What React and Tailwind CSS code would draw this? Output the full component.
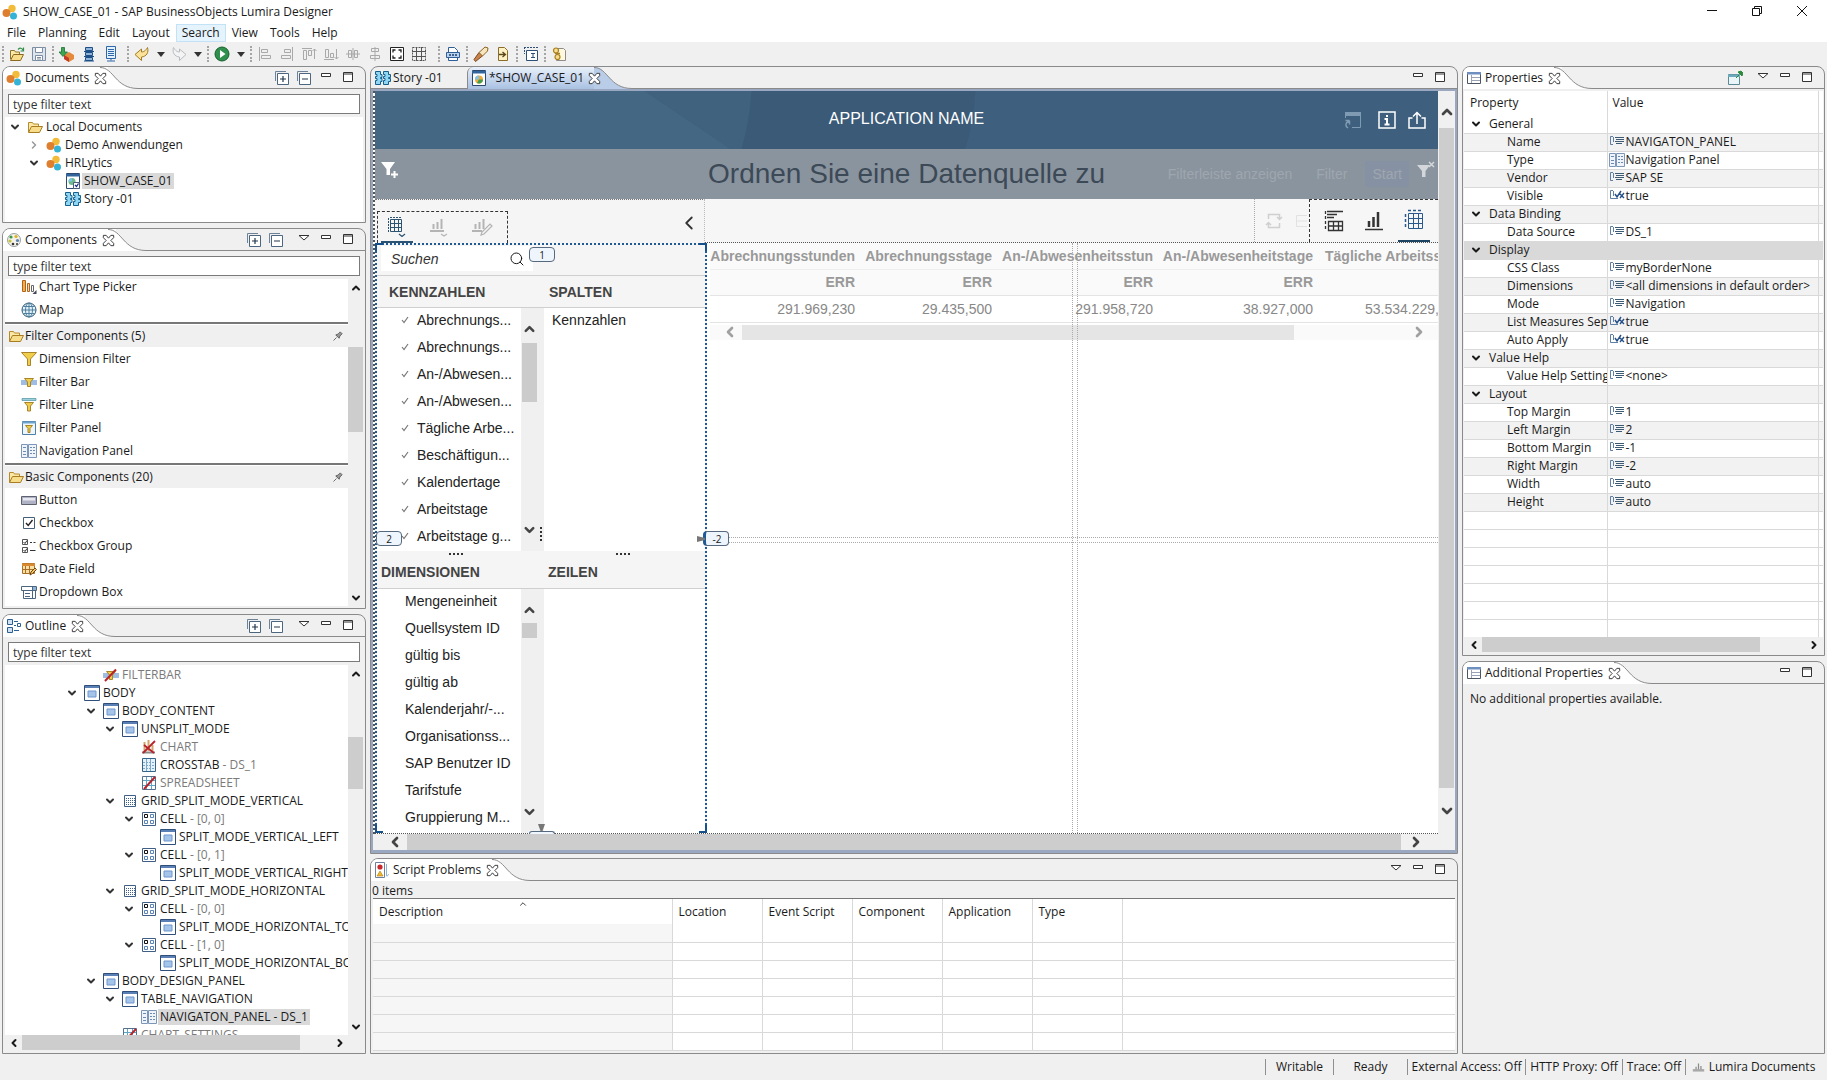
import { ChevronDown, ChevronLeft, ChevronRight, ChevronUp, Search } from "lucide-react";

const UI_FONT = "font-['Open_Sans','Noto_Sans',sans-serif]";
const APP_FONT = "font-['Liberation_Sans',Arial,sans-serif]";

function Icon({ size = 16, className = "", children }) {
  return (
    <svg
      width={size}
      height={size}
      viewBox="0 0 16 16"
      fill="none"
      aria-hidden="true"
      className={`shrink-0 ${className}`}
    >
      {children}
    </svg>
  );
}

const icons = {
  lumira: (
    <>
      <circle cx="10" cy="4.500" r="3.700" fill="#f2bc3a" />
      <circle cx="4.500" cy="9" r="4" fill="#dd7f2e" />
      <circle cx="11.500" cy="12" r="3.500" fill="#35b3d6" />
    </>
  ),
  folder: (
    <>
      <path d="M1.500 13V3.500h4l1 1.500h5v2.500" fill="#fbe7a6" stroke="#b58a2c" />
      <path d="M1.500 13.500 4.500 7.500h11l-3 6z" fill="#f7dc8a" stroke="#a87c20" />
    </>
  ),
  openFolder: (
    <>
      <path d="M1.500 13V4.500h4l1 1.500h4v2" fill="#fbe7a6" stroke="#8a7430" />
      <path d="M1.500 14.500 4.500 8.500h10l-3 6z" fill="#f7dc8a" stroke="#8a6a20" />
      <path d="M9 3.500c2-2 4-1.500 5 .5M14.500 1.500V5h-3" stroke="#2f8f4a" strokeWidth="1.200" />
    </>
  ),
  save: (
    <>
      <path d="M1.500 1.500h13v13h-13z" fill="#dfe5ec" stroke="#7d8ea3" />
      <path d="M4.500 1.500h7v5h-7zM4.500 9.500h7v5h-7zM6 11.500h4M6 13h4" fill="#fff" stroke="#7d8ea3" />
    </>
  ),
  deploy: (
    <>
      <path d="m5 9 5-3 5 3v4l-5 3-5-3z" fill="#e58a3a" />
      <path d="m5 9 5 3v4l-5-3z" fill="#c23a2a" />
      <path d="M2.500 1.500h3V6h3L4 10.500 0 6h2.500z" fill="#3aa653" stroke="#1d7034" strokeWidth=".8" />
    </>
  ),
  stackBlue: (
    <>
      <path d="M4.500 1.500h7v3h-7zM4.500 6.500h7v3h-7zM4.500 11.500h7v3h-7z" fill="#8fb4dc" stroke="#1f4f86" />
      <path d="M3 5.500h10M3 10.500h10M3 15h10" stroke="#1f4f86" />
    </>
  ),
  serverBlue: (
    <>
      <path d="M3.500.5h9v12h-9z" fill="#e4f0fb" stroke="#2f67a8" />
      <path d="M5 3.500h6M5 5.500h6M5 7.500h6M5 9.500h6M8 12.500v2M4 15h8" stroke="#2f67a8" />
    </>
  ),
  undo: <path d="M1 8.500 7.500 3v3c2 0 4-1 6-4.500 1.500 5-1 9-6 9.500v3.500z" fill="#fbe29a" stroke="#a37a22" />,
  redo: <path d="M15 8.500 8.500 3v3c-2 0-4-1-6-4.500C1 6.500 3.500 10.500 8.500 11v3.500z" fill="#f4f4f4" stroke="#b8bcc0" />,
  run: (
    <>
      <circle cx="8" cy="8" r="7" fill="#2f8f4c" stroke="#17602d" />
      <path d="M6 4v8l5.500-4z" fill="#fff" />
    </>
  ),
  alignLeft: <path d="M2.500 1v14M4.500 3.500h6v3h-6zM4.500 9.500h9v3h-9z" stroke="#a9a9a9" />,
  alignRight: <path d="M13.500 1v14M5.500 3.500h6v3h-6zM2.500 9.500h9v3h-9z" stroke="#a9a9a9" />,
  alignTop: <path d="M1 2.500h10M2.500 4.500h3v9h-3zM7.500 4.500h3v5h-3zM13.500 13V3M11.500 5l2-2 2 2" stroke="#a9a9a9" />,
  alignBottom: <path d="M1 13.500h10M2.500 3.500h3v8h-3zM7.500 7.500h3v4h-3zM13.500 3v10M11.500 11l2 2 2-2" stroke="#a9a9a9" />,
  centerH: <path d="M1 8h14M3.500 4.500h3v7h-3zM9.500 4.500h3v7h-3zM8 2v12" stroke="#a9a9a9" />,
  centerV: <path d="M8 1v14M4.500 2.500h7v3h-7zM3.500 9.500h9v3h-9z" stroke="#a9a9a9" />,
  maximizeBox: (
    <>
      <path d="M1.500 1.500h13v13h-13z" fill="#fff" stroke="#222" />
      <path d="M4 6.500V4h2.500M9.500 4H12v2.500M12 9.500V12H9.500M6.500 12H4V9.500" stroke="#222" strokeWidth="1.300" />
    </>
  ),
  gridDark: (
    <>
      <path d="M1.500 1.500h13v13h-13z" stroke="#555" strokeDasharray="2 1" />
      <path d="M5.500 1v14M10.500 1v14M1 5.500h14M1 10.500h14" stroke="#555" />
    </>
  ),
  cssFile: (
    <>
      <path d="M3.500 7V1.500h6l3 3V7M3.500 11v3.500h9V11" fill="#fff" stroke="#2f5f96" />
      <path d="M1.500 6.500h13v5h-13z" fill="#b9d3ee" stroke="#2f5f96" />
      <path d="M4 9h2M7 9h2M10 9h2" stroke="#1d3f6a" strokeWidth="1.500" />
    </>
  ),
  torch: (
    <>
      <path d="m2.500 15.500-1.500-2 5-7 4 3z" fill="#c9824a" stroke="#7a4a20" />
      <path d="M6 6.500 12 1l3 1-.5 3L9.500 10z" fill="#f6e5bd" stroke="#8a6426" />
    </>
  ),
  importFile: (
    <>
      <path d="M3.500 1.500h6l3 3v10h-9z" fill="#fdf1c6" stroke="#8a6d28" />
      <path d="M4 8.500h6M7.500 6l3 2.500-3 2.500" stroke="#5a4718" strokeWidth="1.300" />
    </>
  ),
  textBox: (
    <>
      <path d="M3.500 4.500h11v10h-11z" fill="#fff" stroke="#2d4f78" />
      <path d="M1 1.500h14M1.500 1v7" stroke="#2d4f78" strokeDasharray="2 1" />
      <path d="M8 7.500h4M10 7.500v4M8 11.500h4" stroke="#2d4f78" />
    </>
  ),
  script: (
    <>
      <path d="M5.500 2.500h7l2 2v10h-9z" fill="#fff8dc" stroke="#8c8c8c" />
      <circle cx="5" cy="4.500" r="2.500" fill="#f6dc8c" stroke="#a9801f" strokeWidth="1.200" />
      <circle cx="6.500" cy="11" r="2.500" fill="#f6dc8c" stroke="#a9801f" strokeWidth="1.200" />
      <path d="M4 7.500h5" stroke="#a9801f" strokeWidth="1.500" />
    </>
  ),
  story: (
    <>
      <path d="M.5 1.500h5v3H7v3H5.500v1H7v3H5.500v3h-5v-4H2v-2H.5v-2H2v-2H.5z" fill="#8fd6f5" stroke="#15608e" />
      <path d="M8.500 1.500h5v3h2v3h-2v1h2v3h-2v3h-5v-4H10v-2H8.500v-2H10v-2H8.500z" fill="#8fd6f5" stroke="#15608e" />
    </>
  ),
  appDoc: (
    <>
      <path d="M1.500.5h13v15h-13z" fill="#fff" stroke="#2c4a70" />
      <path d="M1 1h14v2.500H1z" fill="#33649c" />
      <circle cx="8" cy="9.500" r="4" fill="#f0a93a" />
      <path d="M8 9.500h4a4 4 0 0 1-6 3.400z" fill="#3f9d4c" />
      <path d="M8 9.500V5.500a4 4 0 0 0-4 4z" fill="#7fc4e8" />
    </>
  ),
  appDocChecked: (
    <>
      <path d="M1.500.5h13v15h-13z" fill="#fff" stroke="#2c4a70" />
      <path d="M1 1h14v2.500H1z" fill="#33649c" />
      <circle cx="7" cy="8.500" r="3.500" fill="#6fb98a" />
      <path d="M7 8.500V5a3.500 3.500 0 0 0-3.500 3.500z" fill="#7fc4e8" />
      <path d="M8.500 9.500h6v6h-6z" fill="#fff" stroke="#4c5f7a" />
      <path d="m10 12 1.500 1.500 2-3" stroke="#1d2f8a" strokeWidth="1.300" />
    </>
  ),
  palette: (
    <>
      <circle cx="8" cy="8" r="6.500" fill="#f4f2ea" stroke="#9aa0a0" />
      <circle cx="5" cy="5" r="1.600" fill="#3e9a4a" />
      <circle cx="10" cy="4.500" r="1.600" fill="#d8b322" />
      <circle cx="4" cy="9" r="1.600" fill="#c5c33a" />
      <circle cx="11.500" cy="8.500" r="1.600" fill="#5c84b0" />
      <circle cx="7" cy="12" r="1.300" fill="#333" />
      <circle cx="11" cy="12" r="1" fill="#333" />
    </>
  ),
  outline: (
    <>
      <path d="M1.500 1.500h5v5h-5zM1.500 9.500h5v5h-5z" fill="#cfe2f5" stroke="#2b5f92" />
      <path d="M8 3.500h4M8 12.500h5M8 7.500h2M11.500 5.500h3v3h-3z" stroke="#2b5f92" />
    </>
  ),
  table: (
    <>
      <path d="M1.500 2.500h13v11h-13z" fill="#fff" stroke="#4b5566" />
      <path d="M1 2h14v2.500H1z" fill="#6f8fc0" />
      <path d="M5.500 5v8M6 7.500h8M6 10.500h8" stroke="#9aa3b5" />
    </>
  ),
  problems: (
    <>
      <path d="M1.500.5h9v15h-9z" fill="#fff" stroke="#6f7fa0" />
      <circle cx="6" cy="5" r="2.600" fill="#c9282d" />
      <path d="m6 9 3 5H3z" fill="#efb82a" stroke="#a87b10" strokeWidth=".6" />
      <path d="M12.500 2v12c1.500 0 2-1 2-2" stroke="#8fb0cf" />
    </>
  ),
  chartPicker: (
    <>
      <path d="M1.500 1.500h3v11h-3z" fill="#f1b04e" stroke="#b0641c" />
      <path d="M6.500 4.500h2v8h-2z" fill="#f7d5a0" stroke="#b0641c" />
      <path d="M10.500 6.500h2v6h-2z" fill="#fff" stroke="#666" />
      <path d="M15.500 11v4h-4z" fill="#445" />
    </>
  ),
  globe: (
    <>
      <circle cx="8" cy="8" r="7" fill="#e6f3fb" stroke="#2c5570" />
      <path d="M8 1v14M1 8h14M2.500 4.500h11M2.500 11.500h11" stroke="#4d7f9e" />
      <ellipse cx="8" cy="8" rx="3.500" ry="7" stroke="#4d7f9e" />
    </>
  ),
  funnel: <path d="M.5 1.500h15L9.500 8v6.500h-3V8z" fill="#f0cd4a" stroke="#a8842a" />,
  filterBar: (
    <>
      <path d="M0 6h16v5H0z" fill="#9fbde3" />
      <path d="M3.500 4.500h9L9.500 8v4.500h-3V8z" fill="#f0cd4a" stroke="#a8842a" />
    </>
  ),
  filterLine: (
    <>
      <path d="M1 1.500h14v2H1z" fill="#9ed0dc" stroke="#4a90a2" strokeWidth=".7" />
      <path d="M3.500 5.500h9L9.500 9v5h-3V9z" fill="#f0cd4a" stroke="#a8842a" />
    </>
  ),
  filterPanel: (
    <>
      <path d="M1.500 1.500h13v13h-13z" fill="#eef6fb" stroke="#4f7fa5" />
      <path d="M1 1.500h14v2H1z" fill="#6ea3cc" />
      <path d="M4.500 5.500h7L9 8.500v4H7v-4z" fill="#f0cd4a" stroke="#a8842a" />
    </>
  ),
  navPanel: (
    <>
      <path d="M.5 1.500h6v13h-6zM7.500 1.500h8v13h-8z" fill="#eef4fa" stroke="#7d96b8" />
      <path d="M2 4.500h3M2 8.500h3M2 11.500h3M9 4.500h2M12 4.500h2M9 7.500h2M12 7.500h2M9 10.500h2M12 10.500h2" stroke="#6d8ab0" />
    </>
  ),
  button: (
    <>
      <path d="M.5 4.500h15v8H.5z" fill="#aeb2c4" stroke="#5e6270" />
      <path d="M2 6h12v2.500H2z" fill="#e8e9f0" />
    </>
  ),
  checkbox: (
    <>
      <path d="M2.500 2.500h11v11h-11z" fill="#fff" stroke="#45607a" />
      <path d="m5 8 2.200 2.500L11.500 5" stroke="#222" strokeWidth="1.400" />
    </>
  ),
  checkboxGroup: (
    <>
      <path d="M1.500 1.500h5v5h-5zM1.500 9.500h5v5h-5z" fill="#fff" stroke="#555" />
      <path d="m2.500 4 1.500 1.500L6 2.500M2.500 12 4 13.500 6 10.500M9 4.500h2M12.500 4.500h2M9 12.500h5.500" stroke="#333" />
    </>
  ),
  dateField: (
    <>
      <path d="M1.500 2.500h12v10h-12z" fill="#fbe0a3" stroke="#a8702a" />
      <path d="M1 2.500h13v2.500H1z" fill="#d98a30" />
      <path d="M4.500 5v7M8.500 5v7M2 8.500h11" stroke="#a8702a" />
      <path d="m9 14 1-3 4-4 1.500 1.500-4 4z" fill="#f7c65a" stroke="#6b4518" />
    </>
  ),
  dropdown: (
    <>
      <path d="M.5 2.500h15v4H.5zM2.500 6.500h12v8h-12z" fill="#fff" stroke="#4c6680" />
      <path d="M11.500 2.500v12M4 9.500h5M4 12.500h5" stroke="#4c6680" />
      <path d="M12 3h3v3h-3z" fill="#8fb3d9" />
    </>
  ),
  panel: (
    <>
      <path d="M.5.5h15v15H.5z" fill="#fff" stroke="#2f4f7a" />
      <path d="M1 1h14v2H1z" fill="#5a80b5" />
      <path d="M4 6h8v6H4z" fill="#a5c4ea" stroke="#6f97cc" />
    </>
  ),
  chartHidden: (
    <>
      <path d="M3.500 3v9M7.500 1v11M11.500 6v6" stroke="#d3a468" strokeWidth="2" />
      <path d="M1 13.500h13" stroke="#8a8a8a" strokeWidth="2" />
      <path d="M2 14 14 2M3 6l10 8" stroke="#b8232b" strokeWidth="1.800" />
    </>
  ),
  crosstab: (
    <>
      <path d="M1.500 1.500h13v13h-13z" fill="#e6f2fa" stroke="#33658a" />
      <path d="M5.500 2v12M9.500 2v12" stroke="#7fa9c7" />
      <path d="M2 5.500h12M2 8.500h12M2 11.500h12" stroke="#7fa9c7" strokeDasharray="2 1" />
    </>
  ),
  sheetHidden: (
    <>
      <path d="M1.500 1.500h13v13h-13z" fill="#fff" stroke="#54708c" />
      <path d="M5.500 2v12M10.500 2v12M2 5.500h12M2 10.500h12" stroke="#5fa5c4" />
      <path d="M3 14 14 2" stroke="#b8232b" strokeWidth="2" />
    </>
  ),
  filterBarHidden: (
    <>
      <path d="M0 6h16v5H0z" fill="#9fbde3" />
      <path d="M3.500 4.500h9L9.500 8v4.500h-3V8z" fill="#f0cd4a" stroke="#a8842a" />
      <path d="M2 14 13 2.500" stroke="#b8232b" strokeWidth="2" />
    </>
  ),
  gridDots: (
    <>
      <path d="M2.500 2.500h11v11h-11z" fill="#fff" stroke="#3f5f86" />
      <path d="M4 5.500h9M4 7.500h9M4 9.500h9M4 11.500h9" stroke="#3f5f86" strokeDasharray="1 1" />
    </>
  ),
  cell: (
    <>
      <path d="M1.500 1.500h13v13h-13z" fill="#fff" stroke="#3f5f86" />
      <path d="M3.500 3.500h3v3h-3z" stroke="#111" />
      <path d="M9.500 3.500h3v3h-3zM3.500 9.500h3v3h-3zM9.500 9.500h3v3h-3z" stroke="#5c84b5" />
    </>
  ),
  propText: (
    <>
      <path d="M4 2.500H1.500v8H4M4.500 3v5" stroke="#5f7fa5" />
      <path d="M6 3.500h9M7 5.500h8M6 7.500h9M7 9.500h6" stroke="#3d5a73" />
    </>
  ),
  propBool: (
    <>
      <path d="M4 2.500H1.500v8H9M4.500 3v5" stroke="#5f7fa5" />
      <path d="m6 6 2 3 4-6M10 5l5 5M15 5l-4 5" stroke="#24508a" strokeWidth="1.400" />
    </>
  ),
  expandAll: (
    <>
      <path d="M1.500 11V1.500H12" stroke="#6d8296" />
      <path d="M3.500 3.500h11v11h-11z" fill="#fff" stroke="#4c6680" />
      <path d="M6 9h6M9 6v6" stroke="#20364d" strokeWidth="1.200" />
    </>
  ),
  collapseAll: (
    <>
      <path d="M1.500 11V1.500H12" stroke="#6d8296" />
      <path d="M3.500 3.500h11v11h-11z" fill="#fff" stroke="#4c6680" />
      <path d="M6 9h6" stroke="#20364d" strokeWidth="1.200" />
    </>
  ),
  menu: <path d="M3 3.500h10L8 8z" fill="#fff" stroke="#333" />,
  minimize: <path d="M3.500 3.500h9v3h-9z" fill="#fff" stroke="#333" />,
  maximize: (
    <>
      <path d="M3.500 2.500h9v9h-9z" fill="#fff" stroke="#333" />
      <path d="M3 4h10" stroke="#333" />
    </>
  ),
  pinView: (
    <>
      <path d="M1.500 4.500h11v10h-11z" fill="#e9f5f7" stroke="#5b8a95" />
      <path d="M1 4.500h12v2.500H1z" fill="#6ca9bb" />
      <path d="m9 8 3-3m-1-3 4 4 1-3-2-2z" fill="#2e8a3e" stroke="#2e8a3e" />
    </>
  ),
  pin: <path d="m2 14 4-4M5 6.500 9.500 11l1-3 3-3-2.500-2.500-3 3z" fill="#999" stroke="#444" />,
  close: (
    <path
      d="M2.500 2.500h3L8 5.500l2.500-3h3V5L10.500 8l3 3v2.500h-3L8 10.500l-2.500 3h-3V11l3-3-3-3z"
      fill="#fff"
      stroke="#333"
    />
  ),
  network: (
    <>
      <path d="M1 10h14v3H1z" fill="#a8a8a8" />
      <path d="M8 3v7M5 7v3M11 6v4" stroke="#8a8a8a" strokeWidth="1.500" />
    </>
  ),
};

function Glyph({ name, size, className }) {
  return (
    <Icon size={size} className={className}>
      {icons[name]}
    </Icon>
  );
}

/* ---------- window chrome ---------- */

function TitleBar() {
  return (
    <header className="flex h-6 items-center bg-white pl-[2px]">
      <Glyph name="lumira" />
      <h1 className="ml-[5px] flex-1">SHOW_CASE_01 - SAP BusinessObjects Lumira Designer</h1>
      <div className="flex items-center pr-[3px]">
        <button type="button" aria-label="Minimize" className="flex h-6 w-[45px] items-center justify-center">
          <Icon><path d="M3 6.500h10" stroke="#111" /></Icon>
        </button>
        <button type="button" aria-label="Restore" className="flex h-6 w-[45px] items-center justify-center">
          <Icon><path d="M3.500 4.500h7v7h-7zM5.500 4V2.500h7v7H11" stroke="#111" /></Icon>
        </button>
        <button type="button" aria-label="Close" className="flex h-6 w-[45px] items-center justify-center">
          <Icon><path d="m3 2 10 10M13 2 3 12" stroke="#111" /></Icon>
        </button>
      </div>
    </header>
  );
}

const MENUS = ["File", "Planning", "Edit", "Layout", "Search", "View", "Tools", "Help"];

function MenuBar() {
  return (
    <nav className="flex h-[18px] items-center bg-white pl-px">
      {MENUS.map((menu) => (
        <button
          key={menu}
          type="button"
          className={`h-[18px] border px-[5px] leading-4 ${
            menu === "Search" ? "border-[#c4e2f7] bg-[#e5f3fd]" : "border-transparent"
          }`}
        >
          {menu}
        </button>
      ))}
    </nav>
  );
}

const TOOLBAR = [
  "|", "openFolder", "save",
  "|", "deploy", "stackBlue", "serverBlue", "gap",
  "|", "undo", "v", "redo", "v",
  "|", "run", "v",
  "|", "alignLeft", "alignRight", "alignTop", "alignBottom", "centerH", "centerV", "maximizeBox", "gridDark", "gap", "gap",
  "|", "cssFile",
  "|", "torch", "importFile",
  "|", "textBox",
  "|", "script",
];

function ToolBar() {
  return (
    <div role="toolbar" aria-label="Main" className="flex h-6 items-center">
      {TOOLBAR.map((item, i) => {
        if (item === "|") {
          return (
            <span key={i} className="flex w-[6px] justify-center">
              <span className="h-4 border-l-2 border-dotted border-[#a5a5a5]" />
            </span>
          );
        }
        if (item === "gap") return <span key={i} className="w-[3px]" />;
        if (item === "v") {
          return (
            <button key={i} type="button" aria-label="More" className="flex w-[15px] justify-center">
              <svg width="8" height="5" viewBox="0 0 8 5"><path d="M0 0h8L4 5z" fill="#333" /></svg>
            </button>
          );
        }
        return (
          <button key={i} type="button" aria-label={item} className="flex w-[22px] justify-center">
            <Glyph name={item} />
          </button>
        );
      })}
    </div>
  );
}

function TabCurve({ fill = "#ffffff" }) {
  return (
    <svg width="38" height="22" viewBox="0 0 38 22" fill="none" className="-ml-2 shrink-0" aria-hidden="true">
      <path d="M0 0c14 0 14 21 38 21.500V22H0z" fill={fill} />
      <path d="M0 .5c14 0 15 21 38 21" stroke="#8a8a8a" />
    </svg>
  );
}

function ViewActions({ actions }) {
  return (
    <div className="flex items-center pr-[6px]">
      {actions.map((name, i) =>
        name === "gap" ? (
          <span key={i} className="w-[6px]" />
        ) : (
          <button key={i} type="button" aria-label={name} className="flex w-[22px] justify-center">
            <Glyph name={name} />
          </button>
        ),
      )}
    </div>
  );
}

function View({ title, icon, actions, className = "", children }) {
  return (
    <section
      className={`flex flex-col overflow-hidden rounded-t-[8px] border border-[#8a8a8a] bg-[#f0f0f0] ${className}`}
    >
      <div className="flex h-[22px] shrink-0">
        <div className="flex items-center bg-white pl-[3px]">
          <Glyph name={icon} />
          <h2 className="ml-[3px] whitespace-nowrap">{title}</h2>
          <button type="button" aria-label={`Close ${title}`} className="relative z-10 ml-1">
            <Glyph name="close" size={15} />
          </button>
        </div>
        <TabCurve />
        <div className="flex flex-1 justify-end border-b border-[#8a8a8a]">
          <ViewActions actions={actions} />
        </div>
      </div>
      {children}
    </section>
  );
}

function FilterInput({ label }) {
  return (
    <input
      type="text"
      aria-label={label}
      defaultValue="type filter text"
      className="mx-[5px] mt-[5px] mb-[3px] h-5 shrink-0 border border-[#7a7a7a] bg-white px-1 text-[#333] outline-none"
    />
  );
}

function VScroll({ top, size }) {
  return (
    <div className="flex w-[15px] shrink-0 flex-col items-center bg-[#f0f0f0]">
      <button type="button" aria-label="Scroll up" className="flex h-[17px] items-center">
        <ChevronUp size={12} strokeWidth={4} />
      </button>
      <div className="w-full flex-1">
        <div className="bg-[#cdcdcd]" style={{ marginTop: top, height: size }} />
      </div>
      <button type="button" aria-label="Scroll down" className="flex h-[17px] items-center">
        <ChevronDown size={12} strokeWidth={4} />
      </button>
    </div>
  );
}

function TreeRow({ depth, icon, label, note, open, leaf, muted, selected }) {
  const Chevron = open ? ChevronDown : ChevronRight;
  return (
    <li className="flex h-[18px] items-center whitespace-nowrap" style={{ paddingLeft: 2 + depth * 19 }}>
      {leaf ? (
        <span className="w-4 shrink-0" />
      ) : (
        <button type="button" aria-label={`Toggle ${label}`} className="flex w-4 shrink-0 justify-center">
          <Chevron size={12} strokeWidth={open ? 4 : 3} className={open ? "text-[#333]" : "text-[#999]"} />
        </button>
      )}
      <Glyph name={icon} className="ml-1" />
      <span
        className={`ml-px px-[2px] ${selected ? "bg-[#d9d9d9]" : ""} ${muted ? "text-[#7a7a7a]" : ""}`}
      >
        {label}
        {note && <span className={selected ? "" : "text-[#7a7a7a]"}> - {note}</span>}
      </span>
    </li>
  );
}

/* ---------- left column ---------- */

function DocumentsView() {
  return (
    <View
      title="Documents"
      icon="lumira"
      actions={["expandAll", "collapseAll", "minimize", "maximize"]}
      className="h-[157px] shrink-0"
    >
      <FilterInput label="Filter documents" />
      <ul className="mx-[2px] flex-1 bg-white pt-px">
        <TreeRow depth={0} icon="folder" label="Local Documents" open />
        <TreeRow depth={1} icon="lumira" label="Demo Anwendungen" />
        <TreeRow depth={1} icon="lumira" label="HRLytics" open />
        <TreeRow depth={2} icon="appDocChecked" label="SHOW_CASE_01" leaf selected />
        <TreeRow depth={2} icon="story" label="Story -01" leaf />
      </ul>
    </View>
  );
}

const COMPONENT_GROUPS = [
  {
    title: "Filter Components (5)",
    items: [
      ["funnel", "Dimension Filter"],
      ["filterBar", "Filter Bar"],
      ["filterLine", "Filter Line"],
      ["filterPanel", "Filter Panel"],
      ["navPanel", "Navigation Panel"],
    ],
  },
  {
    title: "Basic Components (20)",
    items: [
      ["button", "Button"],
      ["checkbox", "Checkbox"],
      ["checkboxGroup", "Checkbox Group"],
      ["dateField", "Date Field"],
      ["dropdown", "Dropdown Box"],
    ],
  },
];

function PaletteItem({ icon, label }) {
  return (
    <li className="flex h-[23px] items-center pl-4">
      <Glyph name={icon} />
      <span className="ml-[2px]">{label}</span>
    </li>
  );
}

function ComponentsView() {
  return (
    <View
      title="Components"
      icon="palette"
      actions={["expandAll", "collapseAll", "gap", "menu", "minimize", "maximize"]}
      className="h-[381px] shrink-0"
    >
      <FilterInput label="Filter components" />
      <div className="mx-[2px] mb-[2px] flex flex-1 overflow-hidden bg-white">
        <div className="flex-1">
          <ul className="-mt-1 mb-px">
            <PaletteItem icon="chartPicker" label="Chart Type Picker" />
            <PaletteItem icon="globe" label="Map" />
          </ul>
          {COMPONENT_GROUPS.map((group) => (
            <section key={group.title} className="mb-px border-t-2 border-[#777] pt-px">
              <h3 className="flex h-[22px] items-center bg-[#f0f0f0] pl-[3px]">
                <Glyph name="folder" />
                <span className="ml-px flex-1">{group.title}</span>
                <Glyph name="pin" size={12} className="mr-1" />
              </h3>
              <ul>
                {group.items.map(([icon, label]) => (
                  <PaletteItem key={label} icon={icon} label={label} />
                ))}
              </ul>
            </section>
          ))}
        </div>
        <VScroll top={51} size={85} />
      </div>
    </View>
  );
}

const OUTLINE = [
  { depth: 4, icon: "filterBarHidden", label: "FILTERBAR", leaf: true, muted: true },
  { depth: 3, icon: "panel", label: "BODY", open: true },
  { depth: 4, icon: "panel", label: "BODY_CONTENT", open: true },
  { depth: 5, icon: "panel", label: "UNSPLIT_MODE", open: true },
  { depth: 6, icon: "chartHidden", label: "CHART", leaf: true, muted: true },
  { depth: 6, icon: "crosstab", label: "CROSSTAB", note: "DS_1", leaf: true },
  { depth: 6, icon: "sheetHidden", label: "SPREADSHEET", leaf: true, muted: true },
  { depth: 5, icon: "gridDots", label: "GRID_SPLIT_MODE_VERTICAL", open: true },
  { depth: 6, icon: "cell", label: "CELL", note: "[0, 0]", open: true },
  { depth: 7, icon: "panel", label: "SPLIT_MODE_VERTICAL_LEFT", leaf: true },
  { depth: 6, icon: "cell", label: "CELL", note: "[0, 1]", open: true },
  { depth: 7, icon: "panel", label: "SPLIT_MODE_VERTICAL_RIGHT", leaf: true },
  { depth: 5, icon: "gridDots", label: "GRID_SPLIT_MODE_HORIZONTAL", open: true },
  { depth: 6, icon: "cell", label: "CELL", note: "[0, 0]", open: true },
  { depth: 7, icon: "panel", label: "SPLIT_MODE_HORIZONTAL_TO", leaf: true },
  { depth: 6, icon: "cell", label: "CELL", note: "[1, 0]", open: true },
  { depth: 7, icon: "panel", label: "SPLIT_MODE_HORIZONTAL_BO", leaf: true },
  { depth: 4, icon: "panel", label: "BODY_DESIGN_PANEL", open: true },
  { depth: 5, icon: "panel", label: "TABLE_NAVIGATION", open: true },
  { depth: 6, icon: "navPanel", label: "NAVIGATON_PANEL", note: "DS_1", leaf: true, selected: true },
  { depth: 5, icon: "sheetHidden", label: "CHART_SETTINGS", leaf: true, muted: true },
];

function OutlineView() {
  return (
    <View
      title="Outline"
      icon="outline"
      actions={["expandAll", "collapseAll", "gap", "menu", "minimize", "maximize"]}
      className="min-h-0 flex-1"
    >
      <FilterInput label="Filter outline" />
      <div className="mx-[2px] flex min-h-0 flex-1 bg-white">
        <ul className="min-w-0 flex-1 overflow-hidden pt-px">
          {OUTLINE.map((row, i) => (
            <TreeRow key={i} {...row} />
          ))}
        </ul>
        <VScroll top={55} size={52} />
      </div>
      <div className="mx-[2px] mb-[3px] flex h-[15px] shrink-0 items-center pr-[15px]">
        <button type="button" aria-label="Scroll left" className="flex w-[17px] justify-center">
          <ChevronLeft size={12} strokeWidth={4} />
        </button>
        <div className="h-full flex-1">
          <div className="h-full w-[90%] bg-[#cdcdcd]" />
        </div>
        <button type="button" aria-label="Scroll right" className="flex w-[17px] justify-center">
          <ChevronRight size={12} strokeWidth={4} />
        </button>
      </div>
    </View>
  );
}

/* ---------- design canvas ---------- */

function AppHeader() {
  return (
    <div className="relative grid h-[58px] shrink-0 grid-cols-3 items-center bg-[#3e5f7d]">
      <svg className="absolute inset-0 h-full w-full" viewBox="0 0 1064 58" preserveAspectRatio="none" aria-hidden="true">
        <path d="M0 0h270l86 58H0z" fill="#446784" />
        <path d="M270 0h107q-2 30-10 58h-11z" fill="#40627f" />
        <path d="M377 0h224q-2 30-10 58H367q8-28 10-58z" fill="#3a5a77" />
      </svg>
      <span />
      <h2 className="relative pb-[2px] text-center text-[16px] text-white">APPLICATION NAME</h2>
      <div className="relative flex items-center justify-end gap-4 pr-3">
        <button type="button" aria-label="Bookmark" className="text-[#7f9bb3]">
          <svg width="18" height="18" viewBox="0 0 18 18" fill="none" stroke="currentColor">
            <path d="M1.500 7V1.500h15v15H8" />
            <path d="M1 1h16v4H1z" fill="currentColor" stroke="none" />
            <path d="M5.500 9.500v4M5.500 9.500h-4M5 10c-4 2-4 5-1 7" strokeWidth="1.500" />
          </svg>
        </button>
        <button type="button" aria-label="Info" className="text-white">
          <svg width="18" height="18" viewBox="0 0 18 18" fill="none" stroke="currentColor">
            <path d="M1 1h16v16H1z" strokeWidth="1.500" />
            <path d="M9 4v2M6.500 8H9v5.500M6.500 13.500h5" strokeWidth="2" />
          </svg>
        </button>
        <button type="button" aria-label="Export" className="-ml-1 text-white">
          <svg width="18" height="18" viewBox="0 0 18 18" fill="none" stroke="currentColor" strokeWidth="1.500">
            <path d="M4.500 7H1v10h16V7h-3.500M9 13V1.500M5 5.500l4-4 4 4" />
          </svg>
        </button>
      </div>
    </div>
  );
}

function FilterStrip() {
  return (
    <div className="grid h-[50px] shrink-0 grid-cols-[1fr_auto_1fr] items-center bg-[#8a949e]">
      <button type="button" aria-label="Add filter" className="ml-[6px] w-[18px] pb-2 text-white">
        <svg width="18" height="18" viewBox="0 0 18 18" fill="none">
          <path d="M0 1h14L9 8v6H5.500V8z" fill="currentColor" />
          <path d="M13.500 10v7M10 13.500h7" stroke="currentColor" strokeWidth="2" />
        </svg>
      </button>
      <p className="text-[28px] leading-9 text-[#3c4956]">Ordnen Sie eine Datenquelle zu</p>
      <div className="flex items-center justify-end text-[14px] text-[#9ea6af]">
        <span className="mr-6">Filterleiste anzeigen</span>
        <span className="mr-[18px]">Filter</span>
        <button type="button" className="mr-2 h-[26px] bg-[#8692a3] px-[7px]">Start</button>
        <button type="button" aria-label="Clear filter" className="mr-[3px] mb-2 text-[#d3d7db]">
          <svg width="18" height="18" viewBox="0 0 18 18" fill="none">
            <path d="M0 4h13L8.500 10v6H5v-6z" fill="currentColor" />
            <path d="m12 1 5 5M17 1l-5 5" stroke="currentColor" strokeWidth="1.500" />
          </svg>
        </button>
      </div>
    </div>
  );
}

function LeftToolbar() {
  return (
    <div className="flex h-11 w-[330px] shrink-0 items-end border-t border-r border-t-[#777] border-r-[#bbb] border-dotted bg-[#f5f5f5] pl-[2px]">
      <div className="flex h-8 w-[131px] items-center border border-b-0 border-dashed border-[#333] pl-[3px]">
        <button type="button" aria-label="Table" className="flex h-full w-8 items-center justify-center border-b-2 border-[#2d5373] text-[#2d5373]">
          <svg width="20" height="20" viewBox="0 0 20 20" fill="none" stroke="currentColor">
            <path d="M3.500 2.500h11v12h-11zM3 6.500h12M3 10.500h12M7.500 2v13M11.500 2v13" />
            <path d="M1.500 1v14M3 .5h12" strokeDasharray="2 1" />
            <path d="m12 17 3 2.500 3-2.500" strokeWidth="1.200" />
          </svg>
        </button>
        <button type="button" aria-label="Chart" className="ml-4 text-[#b4b4b4]">
          <svg width="20" height="20" viewBox="0 0 20 20" fill="none" stroke="currentColor" strokeWidth="2">
            <path d="M4.500 6v5M8.500 4v7M12.500 1v10M1 13h14" />
            <path d="m12 16 3 2 3-2" strokeWidth="1.200" />
          </svg>
        </button>
        <button type="button" aria-label="Edit chart" className="ml-[22px] text-[#b4b4b4]">
          <svg width="22" height="20" viewBox="0 0 22 20" fill="none" stroke="currentColor" strokeWidth="2">
            <path d="M4.500 6v5M8.500 4v7M12.500 1v10M1 13h10" />
            <path d="m10 17 1-3 8-8 2 2-8 8z" strokeWidth="1.200" />
          </svg>
        </button>
      </div>
      <button type="button" aria-label="Collapse panel" className="mr-1 mb-[9px] ml-auto text-[#333]">
        <ChevronLeft size={22} strokeWidth={2} />
      </button>
    </div>
  );
}

function RightToolbar() {
  return (
    <div className="flex h-11 flex-1 justify-end border-b border-dotted border-[#555] bg-[#f6f6f6]">
      <div className="flex w-[55px] items-center border-l border-dotted border-[#aaa] pl-[10px] text-[#cfcfcf]">
        <button type="button" aria-label="Swap axes">
          <svg width="18" height="18" viewBox="0 0 18 18" fill="none" stroke="currentColor" strokeWidth="1.500">
            <path d="M3.500 7V2.500h11v4M14.500 11v4.500h-11v-4M1 13l2.500-2.500L6 13M12 5l2.500 2.500L17 5" />
          </svg>
        </button>
        <svg width="12" height="18" viewBox="0 0 12 18" fill="none" stroke="#e2e2e2" className="ml-3">
          <path d="M12 3.500H1.500v11H12M2 9h10" />
        </svg>
      </div>
      <div className="flex w-[129px] items-center gap-2 border-t border-l border-dashed border-[#333] pl-2 text-[#333]">
        <button type="button" aria-label="Table and chart" className="flex h-full w-8 items-center justify-center">
          <svg width="20" height="22" viewBox="0 0 20 22" fill="none" stroke="currentColor" strokeWidth="1.300">
            <path d="M3 1.500h16M3 4.500h10M3 7.500h7M4.500 11.500h14v9h-14zM4 16h15M9.500 11v10M14.500 11v10" />
            <path d="M1.500 1v20" strokeDasharray="3 2" />
          </svg>
        </button>
        <button type="button" aria-label="Chart" className="flex h-full w-8 items-center justify-center">
          <svg width="20" height="20" viewBox="0 0 20 20" fill="none" stroke="currentColor">
            <path d="M5 10v6M9.500 6v10M14 1v15" strokeWidth="2.500" />
            <path d="M1 18.500h18" strokeWidth="1.500" />
          </svg>
        </button>
        <button type="button" aria-label="Table" className="flex h-full w-8 items-center justify-center border-b-2 border-[#1f4564] text-[#2a5a8c]">
          <svg width="20" height="22" viewBox="0 0 20 22" fill="none" stroke="currentColor">
            <path d="M4.500 4.500h14v15h-14zM4 9.500h15M4 14.500h15M9.500 4.500v15M14.500 4.500v15" />
            <path d="M1.500 5v15M4 1.500h15" strokeWidth="1.500" strokeDasharray="3 2" />
          </svg>
        </button>
      </div>
    </div>
  );
}

const MEASURES = [
  "Abrechnungs...", "Abrechnungs...", "An-/Abwesen...", "An-/Abwesen...", "Tägliche Arbe...",
  "Beschäftigun...", "Kalendertage", "Arbeitstage", "Arbeitstage g...",
];

const DIMENSIONS = [
  "Mengeneinheit", "Quellsystem ID", "gültig bis", "gültig ab", "Kalenderjahr/-...",
  "Organisationss...", "SAP Benutzer ID", "Tarifstufe", "Gruppierung M...",
];

function NavScroll({ top, size }) {
  return (
    <div className="flex w-[23px] shrink-0 flex-col bg-[#f0f0f0] pr-[7px] pl-px text-[#444]">
      <button type="button" aria-label="Scroll up" className="flex h-[34px] items-center justify-center pt-2">
        <ChevronUp size={16} strokeWidth={4} />
      </button>
      <div className="flex-1">
        <div className="bg-[#cbcbcb]" style={{ marginTop: top, height: size }} />
      </div>
      <button type="button" aria-label="Scroll down" className="flex h-[42px] items-center justify-center">
        <ChevronDown size={16} strokeWidth={4} />
      </button>
    </div>
  );
}

function Grip({ className }) {
  return <span className={`absolute border-[#333] border-dotted ${className}`} />;
}

function Badge({ children, className }) {
  return (
    <span
      className={`absolute flex h-[15px] w-[26px] items-center justify-center rounded-[4px] border border-[#56697e] bg-[#eef5fd] text-[10px] font-normal ${UI_FONT} ${className}`}
    >
      {children}
    </span>
  );
}

function NavigationPanel() {
  return (
    <div className="relative z-10 flex w-[332px] shrink-0 flex-col border-x-2 border-t-2 border-dotted border-[#1d5a96] bg-[#f5f5f5]">
      <div className="flex h-[31px] shrink-0 border-b border-[#cfcfcf] pl-1">
        <label className="mt-px flex h-[25px] w-[152px] items-center bg-white pl-[10px]">
          <input
            type="text"
            aria-label="Suchen"
            placeholder="Suchen"
            className="w-[118px] text-[14px] italic outline-none placeholder:text-[#333]"
          />
          <Search size={16} strokeWidth={1.500} />
        </label>
      </div>
      <div className="flex h-8 shrink-0 items-center border-b border-[#cfcfcf] text-[14px] font-bold text-[#444]">
        <h3 className="w-[172px] pl-3">KENNZAHLEN</h3>
        <h3>SPALTEN</h3>
      </div>
      <div className="flex h-[243px] shrink-0">
        <ul className="flex-1 overflow-hidden bg-white">
          {MEASURES.map((name, i) => (
            <li key={i} className="-mt-[2px] mb-[2px] flex h-[27px] items-center pl-6 text-[14px] whitespace-nowrap text-[#222]">
              <svg width="8" height="8" viewBox="0 0 8 8" fill="none" className="mr-2">
                <path d="m1 4 2 2.500L7 1" stroke="#777" strokeWidth="1.200" />
              </svg>
              {name}
            </li>
          ))}
        </ul>
        <NavScroll top={1} size={59} />
        <ul className="w-[161px] overflow-hidden bg-white">
          <li className="-mt-[2px] flex h-[27px] items-center pl-2 text-[14px] text-[#222]">Kennzahlen</li>
        </ul>
      </div>
      <div className="relative flex h-[38px] shrink-0 items-center border-b border-[#cfcfcf] pt-[5px] text-[14px] font-bold text-[#444]">
        <h3 className="w-[171px] pl-1">DIMENSIONEN</h3>
        <h3>ZEILEN</h3>
        <Grip className="top-[2px] left-[72px] w-[14px] border-t-2" />
        <Grip className="top-[2px] left-[239px] w-[14px] border-t-2" />
        <Grip className="-top-6 left-[163px] h-[14px] border-l-2" />
      </div>
      <div className="flex min-h-0 flex-1">
        <ul className="flex-1 overflow-hidden bg-white">
          {DIMENSIONS.map((name) => (
            <li key={name} className="-mt-[2px] mb-[2px] flex h-[27px] items-center pl-7 text-[14px] whitespace-nowrap text-[#222]">
              {name}
            </li>
          ))}
        </ul>
        <NavScroll top={0} size={15} />
        <div className="w-[161px] bg-white" />
      </div>
      {/* margin handles of the selected component */}
      <Badge className="top-[2px] left-[152px]">1</Badge>
      <Badge className="top-[286px] -left-px">2</Badge>
      <Badge className="top-[286px] -right-6 border-l-[3px] border-l-[#1d5a96]">-2</Badge>
      <span className="absolute -bottom-px left-[152px] h-[3px] w-[26px] rounded-t-[4px] border border-b-0 border-[#56697e] bg-[#eef5fd]" />
      <svg className="absolute bottom-[2px] left-[161px]" width="7" height="7" viewBox="0 0 7 7" aria-hidden="true">
        <path d="M0 0h7L4.500 7h-2z" fill="#777" />
      </svg>
      <svg className="absolute top-[291px] right-0" width="8" height="6" viewBox="0 0 8 6" aria-hidden="true">
        <path d="M0 0l8 2v2L0 6z" fill="#777" />
      </svg>
      <span className="absolute -top-[2px] -left-[2px] h-2 w-2 border-t-2 border-l-2 border-[#14508c]" />
      <span className="absolute -top-[2px] -right-[2px] h-2 w-2 border-t-2 border-r-2 border-[#14508c]" />
      <span className="absolute bottom-0 -left-[2px] h-2 w-2 border-b-2 border-l-2 border-[#14508c]" />
      <span className="absolute -right-[2px] bottom-0 h-2 w-2 border-r-2 border-b-2 border-[#14508c]" />
    </div>
  );
}

function Crosstab() {
  return (
    <div className="relative min-w-0 flex-1 overflow-hidden bg-white pl-[3px]">
      <table className="w-[760px] table-fixed text-right text-[14px] whitespace-nowrap text-[#999]">
        <colgroup>
          <col className="w-[149px]" />
          <col className="w-[137px]" />
          <col className="w-[161px]" />
          <col className="w-[160px]" />
          <col />
        </colgroup>
        <thead className="bg-[#fafafa]">
          <tr className="h-[26px] border-b border-[#eee]">
            <th scope="col" className="pr-1">Abrechnungsstunden</th>
            <th scope="col" className="pr-1">Abrechnungsstage</th>
            <th scope="col" className="pr-1">An-/Abwesenheitsstun</th>
            <th scope="col" className="pr-1">An-/Abwesenheitstage</th>
            <th scope="col" className="pl-2 text-left">Tägliche Arbeitss</th>
          </tr>
          <tr className="h-[26px] border-b border-[#e4e4e4]">
            <th className="pr-1">ERR</th>
            <th className="pr-1">ERR</th>
            <th className="pr-1">ERR</th>
            <th className="pr-1">ERR</th>
            <th />
          </tr>
        </thead>
        <tbody>
          <tr className="h-[27px] border-b border-[#e4e4e4] text-[#888]">
            <td className="pr-1">291.969,230</td>
            <td className="pr-1">29.435,500</td>
            <td className="pr-1">291.958,720</td>
            <td className="pr-1">38.927,000</td>
            <td className="pl-12 text-left">53.534.229,</td>
          </tr>
        </tbody>
      </table>
      <div className="mt-[2px] flex h-[15px] items-center bg-[#fafafa] pr-[7px] pl-2 text-[#a0a0a0]">
        <button type="button" aria-label="Scroll left" className="flex w-6 justify-center">
          <ChevronLeft size={16} strokeWidth={4} />
        </button>
        <div className="h-full flex-1">
          <div className="h-full w-[83%] bg-[#e5e5e5]" />
        </div>
        <button type="button" aria-label="Scroll right" className="flex w-6 justify-center">
          <ChevronRight size={16} strokeWidth={4} />
        </button>
      </div>
      {/* split guides */}
      <span className="absolute inset-y-0 left-1/2 -ml-px w-[6px] border-x border-dotted border-[#aaa]" />
      <span className="absolute inset-x-0 top-1/2 -mt-px h-[6px] border-y border-dotted border-[#aaa]" />
    </div>
  );
}

function Editor() {
  return (
    <section className="flex min-h-0 flex-1 flex-col overflow-hidden rounded-t-[8px] border border-[#8a8a8a] bg-[#f0f0f0]">
      <div className="flex h-[22px] shrink-0" role="tablist">
        <button type="button" role="tab" aria-selected="false" className="flex w-24 items-center border-b border-[#8a8a8a] pl-1">
          <Glyph name="story" />
          <span className="ml-[2px]">Story -01</span>
        </button>
        <div className="flex items-center rounded-tl-[6px] border-l border-[#8a8a8a] bg-linear-to-b from-[#e9f0fa] to-[#a9c1e2] pl-[3px]">
          <button type="button" role="tab" aria-selected="true" className="flex items-center">
            <Glyph name="appDoc" />
            <span className="ml-[2px]">*SHOW_CASE_01</span>
          </button>
          <button type="button" aria-label="Close tab" className="relative z-10 ml-[3px]">
            <Glyph name="close" size={15} />
          </button>
        </div>
        <TabCurve fill="#b9cde8" />
        <div className="flex flex-1 justify-end border-b border-[#8a8a8a]">
          <ViewActions actions={["minimize", "maximize"]} />
        </div>
      </div>
      <div className="flex min-h-0 flex-1 flex-col border-x-2 border-t-2 border-b-[3px] border-[#99a7c0] bg-[#f0f0f0]">
        <div className="flex min-h-0 flex-1">
          <div className={`flex min-w-0 flex-1 flex-col border-b border-l-2 border-dotted border-[#555] bg-white ${APP_FONT}`}>
            <AppHeader />
            <FilterStrip />
            <div className="flex shrink-0">
              <LeftToolbar />
              <RightToolbar />
            </div>
            <div className="flex min-h-0 flex-1">
              <NavigationPanel />
              <Crosstab />
            </div>
          </div>
          <div className="flex w-[17px] shrink-0 flex-col items-center text-[#444]">
            <button type="button" aria-label="Scroll up" className="flex h-[37px] items-center pt-1">
              <ChevronUp size={16} strokeWidth={4} />
            </button>
            <div className="w-[15px] flex-1 bg-[#cdcdcd]" />
            <button type="button" aria-label="Scroll down" className="flex h-[46px] items-center">
              <ChevronDown size={16} strokeWidth={4} />
            </button>
          </div>
        </div>
        <div className="flex h-4 shrink-0 items-center pr-6 pl-[10px] text-[#444]">
          <button type="button" aria-label="Scroll left" className="flex w-6 justify-center">
            <ChevronLeft size={16} strokeWidth={4} />
          </button>
          <div className="h-full flex-1 bg-[#cdcdcd]" />
          <button type="button" aria-label="Scroll right" className="flex w-[30px] justify-center">
            <ChevronRight size={16} strokeWidth={4} />
          </button>
        </div>
      </div>
    </section>
  );
}

const PROBLEM_COLUMNS = ["Location", "Event Script", "Component", "Application", "Type"];

function ScriptProblems() {
  return (
    <View title="Script Problems" icon="problems" actions={["menu", "minimize", "maximize"]} className="h-[196px] shrink-0">
      <p className="h-[17px] shrink-0 pl-px leading-5">0 items</p>
      <div className="mx-[2px] mb-[2px] flex-1 overflow-hidden border-t border-[#777] bg-white">
        <table className="w-full table-fixed text-left">
          <colgroup>
            <col className="w-[299px]" />
            {PROBLEM_COLUMNS.map((name) => (
              <col key={name} className="w-[90px]" />
            ))}
            <col />
          </colgroup>
          <thead>
            <tr className="h-[25px]">
              <th scope="col" className="relative border-r border-[#d9d9d9] pl-[6px] font-normal">
                Description
                <ChevronUp size={10} className="absolute top-0 left-[145px]" />
              </th>
              {PROBLEM_COLUMNS.map((name) => (
                <th key={name} scope="col" className="border-r border-[#d9d9d9] pl-[6px] font-normal">
                  {name}
                </th>
              ))}
              <th />
            </tr>
          </thead>
          <tbody>
            {Array.from({ length: 7 }, (_, row) => (
              <tr key={row} className="h-[18px] border-b border-[#d9d9d9]">
                <td className="border-r border-[#d9d9d9] bg-[#f6f6f6]" />
                {PROBLEM_COLUMNS.map((name) => (
                  <td key={name} className="border-r border-[#d9d9d9]" />
                ))}
                <td />
              </tr>
            ))}
          </tbody>
        </table>
      </div>
    </View>
  );
}

/* ---------- right column ---------- */

const PROPERTIES = [
  { group: "General" },
  { name: "Name", value: "NAVIGATON_PANEL" },
  { name: "Type", value: "Navigation Panel", icon: "navPanel" },
  { name: "Vendor", value: "SAP SE" },
  { name: "Visible", value: "true", icon: "propBool" },
  { group: "Data Binding" },
  { name: "Data Source", value: "DS_1" },
  { group: "Display", selected: true },
  { name: "CSS Class", value: "myBorderNone" },
  { name: "Dimensions", value: "<all dimensions in default order>" },
  { name: "Mode", value: "Navigation" },
  { name: "List Measures Separately", value: "true", icon: "propBool" },
  { name: "Auto Apply", value: "true", icon: "propBool" },
  { group: "Value Help" },
  { name: "Value Help Settings", value: "<none>" },
  { group: "Layout" },
  { name: "Top Margin", value: "1" },
  { name: "Left Margin", value: "2" },
  { name: "Bottom Margin", value: "-1" },
  { name: "Right Margin", value: "-2" },
  { name: "Width", value: "auto" },
  { name: "Height", value: "auto" },
];

function PropertiesView() {
  return (
    <View
      title="Properties"
      icon="table"
      actions={["pinView", "gap", "menu", "minimize", "maximize"]}
      className="h-[590px] shrink-0"
    >
      <div className="mx-[1px] mt-[2px] min-h-0 flex-1 overflow-hidden bg-white">
        <table className="w-full table-fixed text-left whitespace-nowrap">
          <colgroup>
            <col className="w-[143px]" />
            <col />
            <col className="w-[5px]" />
          </colgroup>
          <thead>
            <tr className="h-[24px]">
              <th scope="col" className="border-r border-[#d9d9d9] pl-[6px] font-normal">Property</th>
              <th scope="col" className="border-r border-[#d9d9d9] pl-[5px] font-normal">Value</th>
              <th />
            </tr>
          </thead>
          <tbody>
            {PROPERTIES.map((row, i) => {
              const stripe = i % 2 ? "bg-[#f2f2f2]" : "bg-white";
              return (
                <tr
                  key={row.group ?? row.name}
                  className={`h-[18px] border-b border-[#d9d9d9] ${row.selected ? "bg-[#d9d9d9]" : stripe}`}
                >
                  <th scope="row" className="overflow-hidden border-r border-[#d9d9d9] p-0 font-normal">
                    {row.group ? (
                      <button type="button" className="flex h-[17px] items-center pl-[6px]">
                        <ChevronDown size={12} strokeWidth={4} className="mr-[7px]" />
                        {row.group}
                      </button>
                    ) : (
                      <span className="flex h-[17px] items-center pl-[43px]">{row.name}</span>
                    )}
                  </th>
                  <td className="overflow-hidden border-r border-[#d9d9d9] p-0">
                    {row.value && (
                      <span className="flex h-[17px] items-center pl-px">
                        <Glyph name={row.icon ?? "propText"} size={16} />
                        <span className="ml-px">{row.value}</span>
                      </span>
                    )}
                  </td>
                  <td />
                </tr>
              );
            })}
            {Array.from({ length: 7 }, (_, i) => (
              <tr key={i} className="h-[18px] border-b border-[#d9d9d9]">
                <td className="border-r border-[#d9d9d9]" />
                <td className="border-r border-[#d9d9d9]" />
                <td />
              </tr>
            ))}
          </tbody>
        </table>
      </div>
      <div className="mx-[2px] mb-[3px] flex h-[15px] shrink-0 items-center">
        <button type="button" aria-label="Scroll left" className="flex w-[17px] justify-center">
          <ChevronLeft size={12} strokeWidth={4} />
        </button>
        <div className="h-full flex-1">
          <div className="h-full w-[86%] bg-[#cdcdcd]" />
        </div>
        <button type="button" aria-label="Scroll right" className="flex w-[17px] justify-center">
          <ChevronRight size={12} strokeWidth={4} />
        </button>
      </div>
    </View>
  );
}

function StatusBar() {
  const cell = "flex h-4 items-center justify-center border-l border-[#8f8f8f]";
  return (
    <footer className="flex h-[26px] shrink-0 items-center justify-end pr-3 whitespace-nowrap">
      <span className={`${cell} w-[68px]`}>Writable</span>
      <span className={`${cell} w-[74px]`}>Ready</span>
      <span className={`${cell} w-[118px]`}>External Access: Off</span>
      <span className={`${cell} w-[97px]`}>HTTP Proxy: Off</span>
      <span className={`${cell} w-[63px]`}>Trace: Off</span>
      <span className={`${cell} w-[130px] gap-1 pl-[6px]`}>
        <Glyph name="network" size={13} />
        Lumira Documents
      </span>
    </footer>
  );
}

export default function App() {
  return (
    <div className={`flex h-screen flex-col bg-[#f0f0f0] text-[12px] leading-4 text-[#1a1a1a] ${UI_FONT}`}>
      <TitleBar />
      <MenuBar />
      <ToolBar />
      <main className="flex min-h-0 flex-1 gap-1 px-[2px]">
        <div className="flex w-[364px] shrink-0 flex-col gap-[5px]">
          <DocumentsView />
          <ComponentsView />
          <OutlineView />
        </div>
        <div className="flex min-w-0 flex-1 flex-col gap-1">
          <Editor />
          <ScriptProblems />
        </div>
        <div className="flex w-[363px] shrink-0 flex-col gap-[5px]">
          <PropertiesView />
          <View title="Additional Properties" icon="table" actions={["minimize", "maximize"]} className="min-h-0 flex-1">
            <p className="px-[7px] pt-[7px]">No additional properties available.</p>
          </View>
        </div>
      </main>
      <StatusBar />
    </div>
  );
}
